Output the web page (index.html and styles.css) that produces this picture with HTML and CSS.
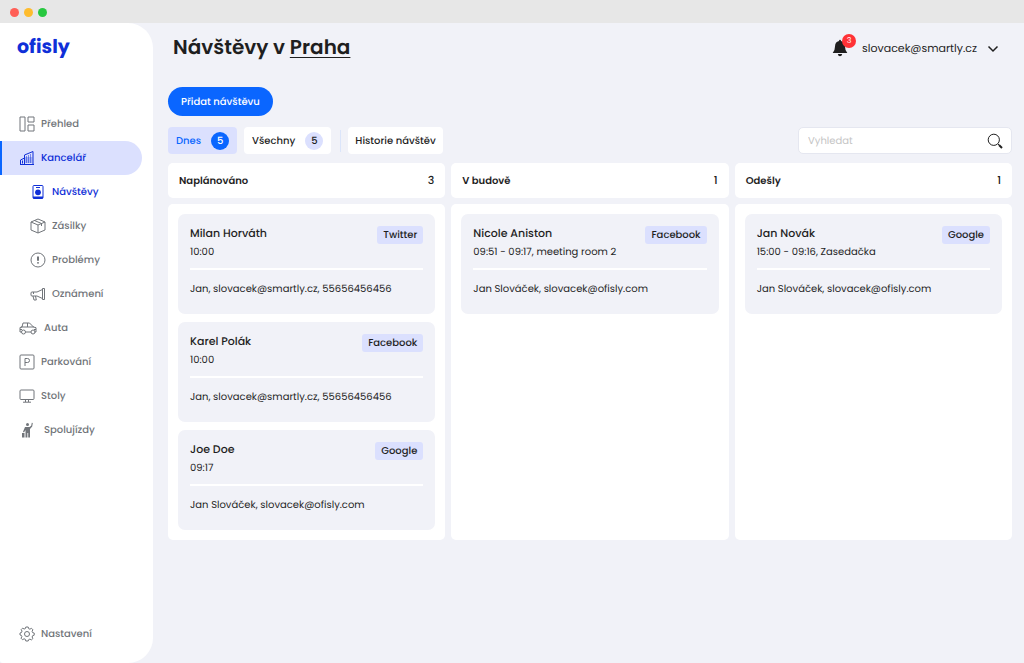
FILE: index.html
```html
<!DOCTYPE html>
<html lang="cs">
<head>
<meta charset="utf-8">
<meta name="viewport" content="width=device-width, initial-scale=1">
<title>ofisly – Návštěvy</title>
<link rel="stylesheet" href="styles.css">
</head>
<body>
<div class="titlebar"><span class="dot dot-red"></span><span class="dot dot-yellow"></span><span class="dot dot-green"></span></div>
<div class="app">
  <aside class="sidebar">
    <a class="logo" href="#">ofisly</a>
    <nav class="nav">
      <a class="nav-item" href="#"><svg class="icon" viewBox="0 0 16 16"><path d="M1 1h5v14H1zM9 1h6v5H9zM9 9h6v6H9z"/></svg>Přehled</a>
      <a class="nav-item active" href="#"><svg class="icon" viewBox="0 0 16 16"><path d="M1.500 14.500V10l4-2v6.500M5.500 14.500V5l8.500-3.500v13zM1 14.500h14M3.500 10.500v3"/><path class="fine" d="M7.500 6v7M9.500 5v8M11.500 4v9M6 8h7.500M6 10h7.500M6 12h7.500"/></svg>Kancelář</a>
      <a class="nav-item sub current" href="#"><svg class="icon" viewBox="0 0 16 16"><rect x="3" y="1.500" width="10" height="13" rx="1"/><path d="M6 3.500h4"/><path class="solid" d="M3 12.500h10v2H3z"/><circle class="solid" cx="8" cy="8.300" r="2.900"/></svg>Návštěvy</a>
      <a class="nav-item sub" href="#"><svg class="icon" viewBox="0 0 16 16"><path d="M1 4l7-3 7 3v8l-7 3-7-3zM1 4l7 3 7-3M8 7v8M4.500 2.500l7 3V8"/></svg>Zásilky</a>
      <a class="nav-item sub" href="#"><svg class="icon" viewBox="0 0 16 16"><circle cx="8" cy="8" r="7"/><path class="bold" d="M8 4.500v4.300M8 10.300v1.300"/></svg>Problémy</a>
      <a class="nav-item sub" href="#"><svg class="icon" viewBox="0 0 16 16"><path d="M12.500 2.500h2v11h-2zM12.500 3.500L7 6H2Q1 6 1 7v2q0 1 1 1h5l5.500 2.500M3 10l1 4h2.300L5.500 10M3.500 8V6"/></svg>Oznámení</a>
      <a class="nav-item wide" href="#"><svg class="icon" viewBox="0 0 18 16"><path d="M2.500 12H1V7.500l2-.5 1-4h6.500l4 4 2.500.7V12h-1.500M6.500 12H12M2 7h13M8.500 3v4M1 9.500h2M15 9.500h2"/><circle cx="4.500" cy="12" r="2"/><circle cx="14" cy="12" r="2"/></svg>Auta</a>
      <a class="nav-item" href="#"><svg class="icon" viewBox="0 0 16 16"><rect x="1" y="1" width="14" height="14" rx="1"/><path d="M6 12V4.500h2.500q2 0 2 2t-2 2H6"/></svg>Parkování</a>
      <a class="nav-item" href="#"><svg class="icon" viewBox="0 0 16 16"><rect x="1" y="2" width="14" height="9.500" rx="1"/><path d="M6.500 11.500v2.500M9.500 11.500v2.500M4 14.200h8"/></svg>Stoly</a>
      <a class="nav-item wide" href="#"><svg class="icon" viewBox="0 0 18 16"><circle class="solid" cx="8.500" cy="2.500" r="1.500"/><path class="solid" d="M6 5h4.500l1.700-1.300.6-3 1 .3-.6 3.500L11 7v8.500H9.200V11h-.8v4.500H6.500V8L5 10.500l-1-.8zM3 11h2.500v4.500H3z"/></svg>Spolujízdy</a>
    </nav>
    <a class="nav-item settings" href="#"><svg class="icon" viewBox="0 0 16 16"><circle cx="8" cy="8" r="2.500"/><path d="M6.800 1h2.400l.5 1.700 1.200.5 1.600-.9 1.400 1.500-.8 1.500.5 1.300 1.600.4v2.200l-1.600.5-.5 1.300.8 1.500-1.500 1.400-1.500-.8-1.200.5L9.200 15H6.800l-.5-1.700-1.200-.5-1.600.9-1.500-1.500.9-1.500-.5-1.300L1 9V7l1.500-.5.5-1.400-.8-1.500 1.400-1.400 1.600.8 1.200-.5z"/></svg>Nastavení</a>
  </aside>
  <main class="main">
    <header class="topbar">
      <h1 class="title">Návštěvy v <a href="#">Praha</a></h1>
      <div class="account">
        <button class="bell" aria-label="Oznámení, 3 nová"><svg viewBox="0 0 16 18"><path d="M7 2Q7 .8 8 .8T9 2q4 .8 4 5.500 0 4 2.300 6.500H.7Q3 11.500 3 7.500 3 2.800 7 2zM5.800 15h4.400Q9.800 17.300 8 17.300T5.800 15z"/></svg><span class="bell-count">3</span></button>
        <button class="user">slovacek@smartly.cz<svg class="chevron" viewBox="0 0 12 8"><path d="M1.500 1.500L6 6l4.500-4.500"/></svg></button>
      </div>
    </header>
    <button class="add">Přidat návštěvu</button>
    <div class="toolbar">
      <button class="tab selected">Dnes <span class="count">5</span></button>
      <button class="tab">Všechny <span class="count">5</span></button>
      <span class="divider"></span>
      <button class="tab plain">Historie návštěv</button>
      <form class="search" role="search">
        <input type="search" aria-label="Vyhledat" placeholder="Vyhledat">
        <button class="search-button" type="button" aria-label="Hledat"><svg viewBox="0 0 16 16"><circle cx="6.800" cy="6.800" r="5.600"/><path d="M11 11l1.500 1.500"/><path class="handle" d="M12 12l3 3"/></svg></button>
      </form>
    </div>
    <div class="board">
      <section class="column">
        <header class="column-head"><h2>Naplánováno</h2><span>3</span></header>
        <div class="column-body">
          <article class="card"><div class="card-top"><div><h3>Milan Horváth</h3><p>10:00</p></div><span class="tag">Twitter</span></div><p class="host">Jan, slovacek@smartly.cz, 55656456456</p></article>
          <article class="card"><div class="card-top"><div><h3>Karel Polák</h3><p>10:00</p></div><span class="tag">Facebook</span></div><p class="host">Jan, slovacek@smartly.cz, 55656456456</p></article>
          <article class="card"><div class="card-top"><div><h3>Joe Doe</h3><p>09:17</p></div><span class="tag">Google</span></div><p class="host">Jan Slováček, slovacek@ofisly.com</p></article>
        </div>
      </section>
      <section class="column">
        <header class="column-head"><h2>V budově</h2><span>1</span></header>
        <div class="column-body">
          <article class="card"><div class="card-top"><div><h3>Nicole Aniston</h3><p>09:51 - 09:17, meeting room 2</p></div><span class="tag">Facebook</span></div><p class="host">Jan Slováček, slovacek@ofisly.com</p></article>
        </div>
      </section>
      <section class="column">
        <header class="column-head"><h2>Odešly</h2><span>1</span></header>
        <div class="column-body">
          <article class="card"><div class="card-top"><div><h3>Jan Novák</h3><p>15:00 - 09:16, Zasedačka</p></div><span class="tag">Google</span></div><p class="host">Jan Slováček, slovacek@ofisly.com</p></article>
        </div>
      </section>
    </div>
  </main>
</div>
</body>
</html>
```
FILE: styles.css
```css
* { box-sizing: border-box; }
body {
  margin: 0;
  min-height: 100vh;
  display: flex;
  flex-direction: column;
  background: #f1f2f8;
  color: #1f1f1f;
  font-family: Poppins, Inter, "Noto Sans", sans-serif;
  font-size: 10px;
  text-rendering: geometricPrecision;
}
h1, h2, h3, p { margin: 0; }
a { color: inherit; text-decoration: none; }
button { border: 0; padding: 0; background: none; color: inherit; font: inherit; text-rendering: inherit; cursor: pointer; }
svg { display: block; fill: none; stroke: currentColor; }

.titlebar { display: flex; align-items: center; gap: 5px; height: 23px; padding: 1px 10px 0; background: #e7e7e7; }
.dot { width: 9px; height: 9px; border-radius: 50%; }
.dot-red { background: #ff5f57; }
.dot-yellow { background: #febc2e; }
.dot-green { background: #28c840; }

.app { flex: 1; display: flex; }
.sidebar {
  flex: 0 0 153px;
  display: flex;
  flex-direction: column;
  padding: 10px 11px 12px 0;
  background: #fff;
  border-radius: 0 25px 25px 3px;
}
.logo { padding-left: 17px; color: #0f2fd8; font-size: 19px; line-height: 28px; font-weight: 700; }
.nav { margin-top: 46px; }
.nav-item {
  display: flex;
  align-items: center;
  gap: 6px;
  height: 34px;
  padding-left: 19px;
  color: #71757a;
  font-size: 10px;
  font-weight: 500;
}
.nav-item.sub { padding-left: 30px; }
.nav-item.wide { gap: 7px; }
.icon { width: 16px; height: 16px; flex: none; stroke-width: 1; }
.wide .icon { width: 18px; }
.icon .solid { fill: currentColor; stroke: none; }
.icon .bold { stroke-width: 2; }
.icon .fine { opacity: .5; }
.nav-item.active {
  padding-left: 17px;
  border-left: 2px solid #0a66ff;
  border-radius: 0 17px 17px 0;
  background: #dbe0fe;
}
.nav-item.active, .nav-item.current { color: #0f2fd8; }
.settings { margin-top: auto; }

.main { flex: 1; min-width: 0; display: flex; flex-direction: column; padding: 8px 12px 16px 15px; }
.topbar { display: flex; align-items: center; justify-content: space-between; height: 32px; padding: 0 13px 0 5px; }
.title { font-size: 20px; line-height: 32px; font-weight: 600; }
.title a { text-decoration: underline; text-decoration-thickness: 1px; text-underline-offset: 3px; text-decoration-skip-ink: none; }
.account { display: flex; align-items: center; gap: 14px; padding-top: 1px; }
.bell { position: relative; }
.bell svg { width: 16px; height: 18px; fill: #1f1f1f; stroke: none; }
.bell-count {
  position: absolute;
  top: -5px;
  right: -8px;
  width: 14px;
  height: 14px;
  border-radius: 50%;
  background: #ff3236;
  color: #fff;
  font-size: 8px;
  line-height: 14px;
}
.user { display: flex; align-items: center; gap: 10px; padding-top: 2px; font-size: 11px; }
.chevron { width: 12px; height: 8px; stroke-width: 1.500; }

.add {
  align-self: flex-start;
  height: 29px;
  margin-top: 24px;
  padding: 0 13px;
  border-radius: 15px;
  background: #0a66ff;
  color: #fff;
  font-weight: 500;
}
.toolbar { display: flex; align-items: center; gap: 7px; margin-top: 11px; }
.tab {
  display: flex;
  align-items: center;
  gap: 10px;
  height: 27px;
  padding: 0 8px;
  border-radius: 4px;
  background: #fff;
  font-weight: 500;
}
.tab.selected { background: #dbe0fe; color: #0a66ff; }
.tab.plain { padding: 0 7px; }
.count { width: 18px; height: 18px; border-radius: 50%; background: #dbe0fe; line-height: 18px; }
.selected .count { background: #0a66ff; color: #fff; }
.divider { width: 1px; height: 22px; margin: 0 0 0 2px; background: #dbe5fa; }
.search {
  flex: 0 1 214px;
  min-width: 0;
  display: flex;
  align-items: center;
  height: 27px;
  margin-left: auto;
  padding: 0 8px 0 9px;
  border: 1px solid #e5e7f0;
  border-radius: 5px;
  background: #fff;
}
.search input { flex: 1; width: 100%; min-width: 0; padding: 0; border: 0; outline: 0; background: none; font: inherit; text-rendering: inherit; }
.search input::placeholder { color: #c5c5c5; opacity: 1; }
.search-button svg { width: 16px; height: 16px; stroke-width: 1; }
.search-button .handle { stroke-width: 2; }

.board { display: grid; grid-template-columns: repeat(3, minmax(0, 1fr)); gap: 6px; margin-top: 9px; }
.column { display: flex; flex-direction: column; gap: 6px; }
.column-head {
  display: flex;
  align-items: center;
  justify-content: space-between;
  height: 35px;
  padding: 0 11px;
  border-radius: 5px;
  background: #fff;
  font-size: 11px;
  font-weight: 500;
}
.column-head h2 { font-size: 10px; font-weight: 600; }
.column-body { flex: 1; display: flex; flex-direction: column; gap: 8px; padding: 10px; border-radius: 5px; background: #fff; }
.card { min-height: 100px; padding: 10px 12px; border-radius: 7px; background: #f1f2f8; }
.card-top { display: flex; align-items: flex-start; justify-content: space-between; padding-bottom: 6px; border-bottom: 2px solid #fff; }
.card h3 { font-size: 11px; line-height: 18px; font-weight: 500; }
.card p { line-height: 20px; }
.card .host { margin-top: 9px; }
.tag { margin-top: 2px; padding: 0 6px; border-radius: 3px; background: #dbe0fe; line-height: 18px; font-weight: 500; }
```
